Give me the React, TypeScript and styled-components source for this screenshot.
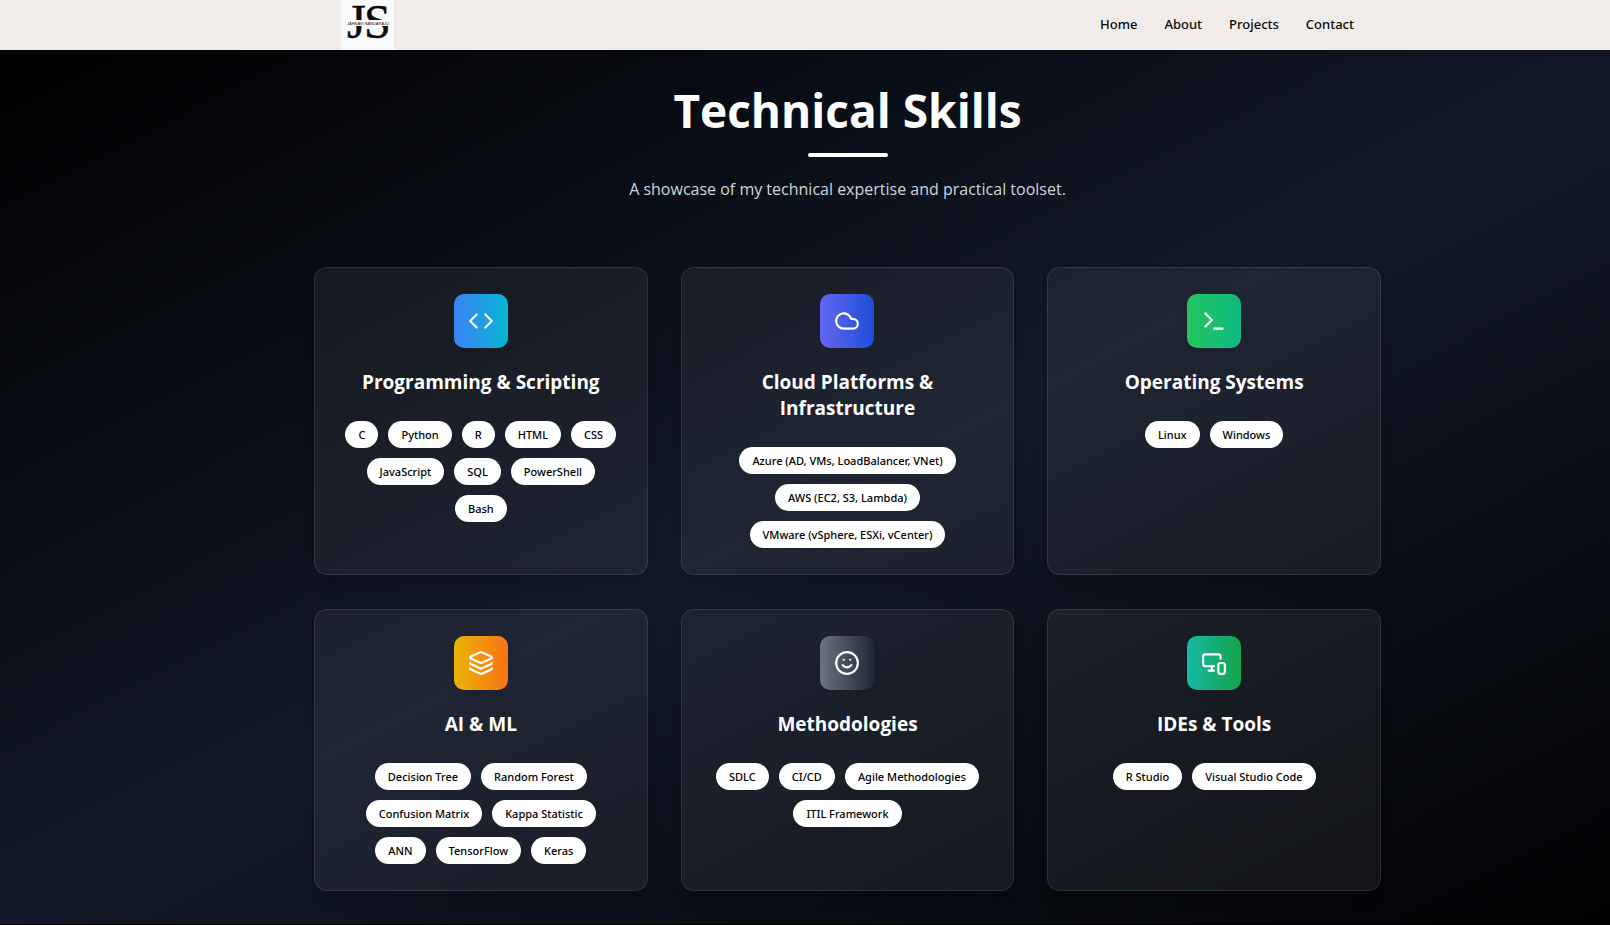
import React from "react";
import styled, { createGlobalStyle } from "styled-components";
import { Cloud, Code, Layers, MonitorSmartphone, Smile, Terminal, type LucideIcon } from "lucide-react";

const GlobalStyle = createGlobalStyle`
  *, *::before, *::after { box-sizing: border-box; }
  body {
    margin: 0;
    background: #000;
    color: #fff;
    font-family: "Segoe UI", "Open Sans", "Noto Sans", sans-serif;
  }
  h1, h2, p, ul { margin: 0; padding: 0; }
  ul { list-style: none; }
`;

const OFFSET = "85px";

const Header = styled.header`
  background: #f1ecea;
  padding-left: ${OFFSET};
`;

const HeaderInner = styled.div`
  max-width: 1067px;
  margin: 0 auto;
  padding: 0 27px;
  height: 50px;
  display: flex;
  align-items: center;
  justify-content: space-between;
`;

const LogoLink = styled.a`
  display: block;
  width: 53px;
  height: 50px;
  background: #fafafa;
`;

const Nav = styled.nav`
  display: flex;
  gap: 27px;
`;

const NavLink = styled.a`
  color: #0a0a0a;
  font-family: "Segoe UI", "Noto Sans", sans-serif;
  font-size: 13px;
  line-height: 20px;
  padding-bottom: 2px;
  font-weight: 500;
  text-decoration: none;
`;

const Section = styled.main`
  padding: 34px 0 33px ${OFFSET};
  background: linear-gradient(to bottom right, #000, #111827, #000) 0 0 / calc(100% + ${OFFSET}) 100% no-repeat;
`;

const Intro = styled.div`
  display: flex;
  flex-direction: column;
  align-items: center;
  text-align: center;
  margin-bottom: 64px;
`;

const Title = styled.h1`
  font-size: 46px;
  line-height: 52px;
  font-weight: 700;
`;

const Rule = styled.div`
  width: 80px;
  height: 4px;
  margin: 17px 0 18px;
  border-radius: 4px;
  background: #fff;
`;

const Subtitle = styled.p`
  font-size: 16px;
  line-height: 28px;
  color: #d1d5db;
`;

const Grid = styled.div`
  max-width: 1067px;
  margin: 0 auto;
  display: grid;
  grid-template-columns: repeat(3, 1fr);
  gap: 34px 33px;
`;

const Card = styled.section`
  display: flex;
  flex-direction: column;
  align-items: center;
  padding: 26px;
  border: 1px solid rgba(255, 255, 255, 0.1);
  border-radius: 13px;
  background: rgba(255, 255, 255, 0.06);
  box-shadow: 0 10px 16px -3px rgba(0, 0, 0, 0.1), 0 4px 6px -4px rgba(0, 0, 0, 0.1);
`;

const IconTile = styled.div<{ $from: string; $to: string }>`
  display: grid;
  place-items: center;
  width: 54px;
  height: 54px;
  border-radius: 10px;
  background: linear-gradient(to right, ${(p) => p.$from}, ${(p) => p.$to});
  box-shadow: 0 4px 6px -1px rgba(0, 0, 0, 0.1);
`;

const CardTitle = styled.h2`
  margin: 21px 0 26px;
  font-size: 19px;
  line-height: 26px;
  font-weight: 700;
  text-align: center;
`;

const Chips = styled.ul`
  display: flex;
  flex-wrap: wrap;
  justify-content: center;
  gap: 10px;
`;

const Chip = styled.li`
  padding: 5px 13px;
  border-radius: 14px;
  background: #fff;
  color: #000;
  font-family: "Segoe UI", "Noto Sans", sans-serif;
  font-size: 11px;
  line-height: 17px;
  font-weight: 500;
`;

interface Skill {
  title: string;
  icon: LucideIcon;
  from: string;
  to: string;
  items: string[];
}

const skills: Skill[] = [
  { title: "Programming & Scripting", icon: Code, from: "#3b82f6", to: "#06b6d4", items: ["C", "Python", "R", "HTML", "CSS", "JavaScript", "SQL", "PowerShell", "Bash"] },
  { title: "Cloud Platforms & Infrastructure", icon: Cloud, from: "#6366f1", to: "#1d4ed8", items: ["Azure (AD, VMs, LoadBalancer, VNet)", "AWS (EC2, S3, Lambda)", "VMware (vSphere, ESXi, vCenter)"] },
  { title: "Operating Systems", icon: Terminal, from: "#22c55e", to: "#10b981", items: ["Linux", "Windows"] },
  { title: "AI & ML", icon: Layers, from: "#eab308", to: "#f97316", items: ["Decision Tree", "Random Forest", "Confusion Matrix", "Kappa Statistic", "ANN", "TensorFlow", "Keras"] },
  { title: "Methodologies", icon: Smile, from: "#6b7280", to: "#1f2937", items: ["SDLC", "CI/CD", "Agile Methodologies", "ITIL Framework"] },
  { title: "IDEs & Tools", icon: MonitorSmartphone, from: "#14b8a6", to: "#16a34a", items: ["R Studio", "Visual Studio Code"] },
];

function Logo() {
  return (
    <svg width="53" height="50" viewBox="0 0 53 50" aria-hidden="true">
      <g fontFamily="'Liberation Serif', serif" fontSize="48" fill="#0a0a0a" stroke="#0a0a0a" strokeWidth="0.5">
        <text x="6" y="38">J</text>
        <text x="23" y="38">S</text>
      </g>
      <rect x="4" y="20" width="46" height="6" fill="#fafafa" />
      <text x="27" y="25" textAnchor="middle" fontFamily="'Liberation Sans', sans-serif" fontSize="4" fill="#222">JAHNAVI BANDARAJU</text>
    </svg>
  );
}

export default function App() {
  return (
    <>
      <GlobalStyle />
      <Header>
        <HeaderInner>
          <LogoLink href="#home" aria-label="Home page"><Logo /></LogoLink>
          <Nav>
            {["Home", "About", "Projects", "Contact"].map((n) => (
              <NavLink key={n} href={`#${n.toLowerCase()}`}>{n}</NavLink>
            ))}
          </Nav>
        </HeaderInner>
      </Header>
      <Section>
        <Intro>
          <Title>Technical Skills</Title>
          <Rule />
          <Subtitle>A showcase of my technical expertise and practical toolset.</Subtitle>
        </Intro>
        <Grid>
          {skills.map(({ title, icon: Icon, from, to, items }) => (
            <Card key={title}>
              <IconTile $from={from} $to={to}><Icon size={26} color="#fff" strokeWidth={2} /></IconTile>
              <CardTitle>{title}</CardTitle>
              <Chips>
                {items.map((item) => <Chip key={item}>{item}</Chip>)}
              </Chips>
            </Card>
          ))}
        </Grid>
      </Section>
    </>
  );
}
